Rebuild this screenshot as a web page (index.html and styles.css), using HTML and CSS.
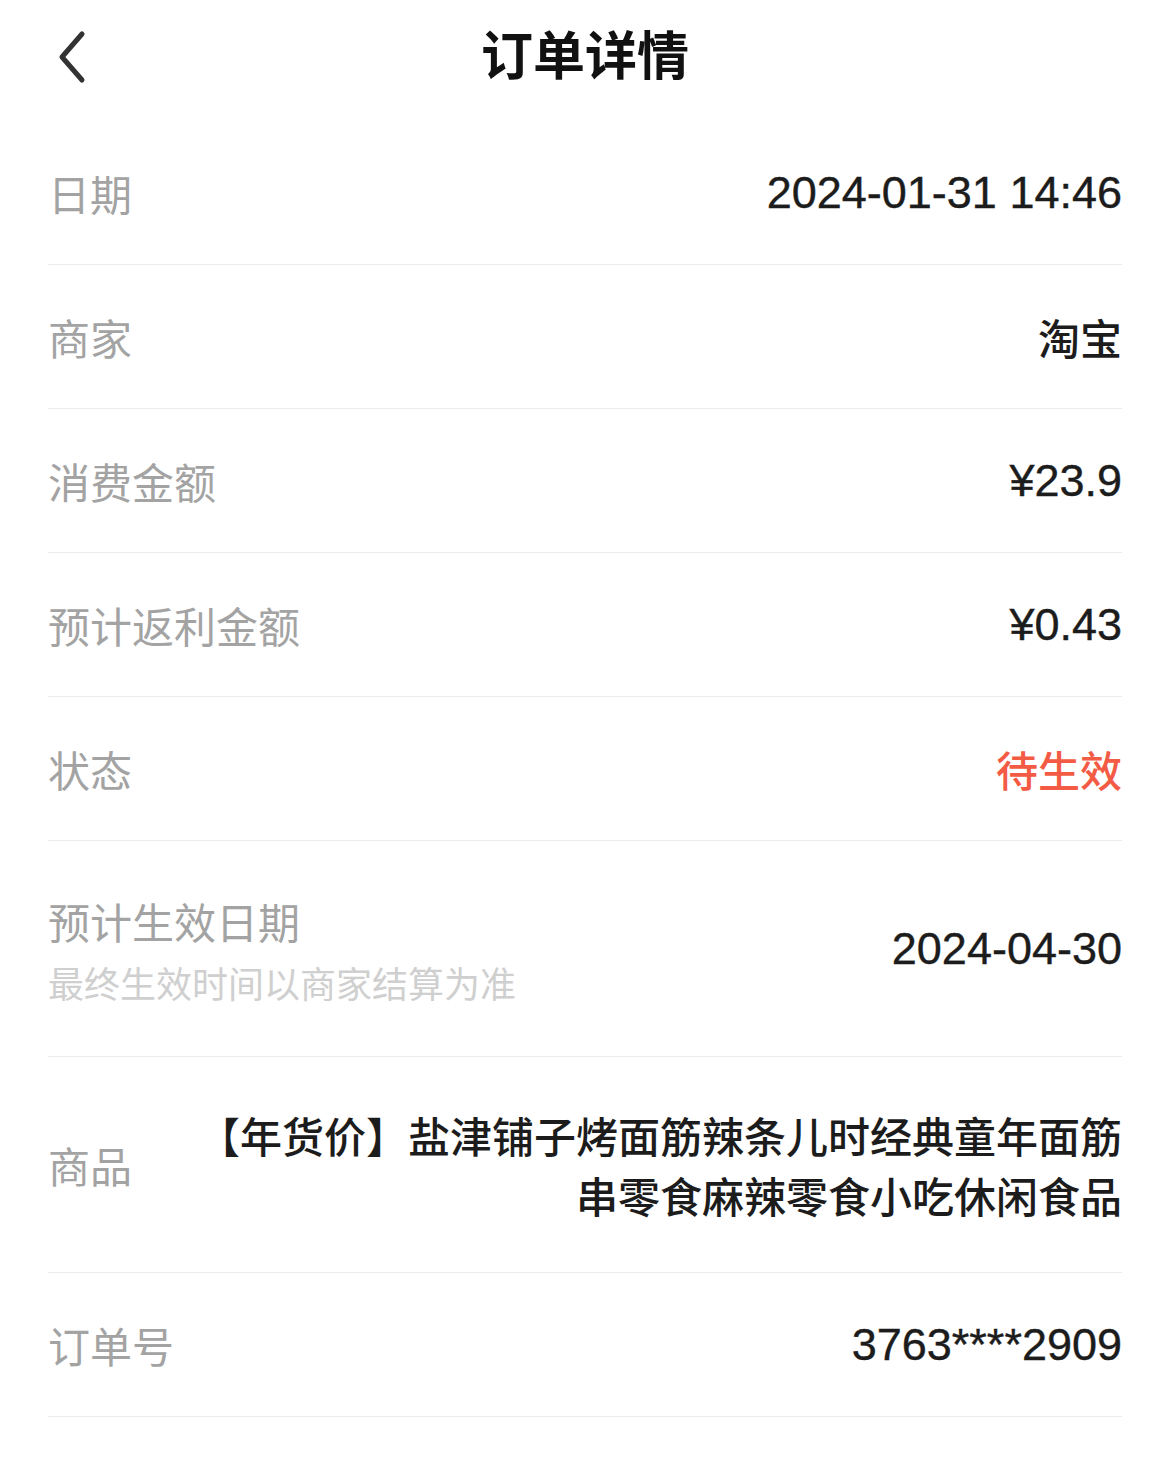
FILE: index.html
```html
<!DOCTYPE html>
<html lang="zh-CN">
<head>
  <meta charset="UTF-8">
  <meta name="viewport" content="width=device-width, initial-scale=1">
  <title>订单详情</title>
  <link rel="stylesheet" href="styles.css">
</head>
<body>

  <header class="topbar">
    <a class="back" href="#">
      <svg width="40" height="60" viewBox="0 0 40 60">
        <polyline points="26,10 6,33 26,56" fill="none" stroke="#333" stroke-width="5" stroke-linecap="round" stroke-linejoin="round"/>
      </svg>
    </a>
    <h1>订单详情</h1>
  </header>

  <!-- 订单信息列表 -->
  <section class="detail">
    <div class="row">
      <span class="label">日期</span>
      <span class="value num">2024-01-31 14:46</span>
    </div>
    <div class="row">
      <span class="label">商家</span>
      <span class="value">淘宝</span>
    </div>
    <div class="row">
      <span class="label">消费金额</span>
      <span class="value num">¥23.9</span>
    </div>
    <div class="row">
      <span class="label">预计返利金额</span>
      <span class="value num">¥0.43</span>
    </div>
    <div class="row">
      <span class="label">状态</span>
      <span class="value status">待生效</span>
    </div>
    <div class="row tall">
      <div class="label-group">
        <span class="label">预计生效日期</span>
        <span class="hint">最终生效时间以商家结算为准</span>
      </div>
      <span class="value num">2024-04-30</span>
    </div>
    <div class="row tall">
      <span class="label">商品</span>
      <span class="value goods">【年货价】盐津铺子烤面筋辣条儿时经典童年面筋串零食麻辣零食小吃休闲食品</span>
    </div>
    <div class="row">
      <span class="label">订单号</span>
      <span class="value num">3763****2909</span>
    </div>
  </section>

</body>
</html>
```

FILE: styles.css
```css
/* 基础 */
body {
  margin: 0;
  background: #fff;
  color: #1c1c1c;
  font-family: "Liberation Sans", "Noto Sans CJK SC", sans-serif;
}

/* 顶部标题栏 */
.topbar {
  position: relative;
  height: 121px;
  display: flex;
  align-items: center;
  justify-content: center;
}
.topbar h1 {
  margin: 0;
  margin-top: -17px;
  font-family: "Noto Sans CJK SC", sans-serif;
  font-size: 52px;
  font-weight: 700;
  color: #111;
}
.back {
  position: absolute;
  left: 56px;
  top: 24px;
  display: block;
  width: 40px;
  height: 60px;
}

/* 列表 */
.detail {
  padding: 0 48px;
}
.row {
  display: flex;
  align-items: center;
  justify-content: space-between;
  height: 144px;
  border-bottom: 1px solid #ececec;
  box-sizing: border-box;
}
.row.tall {
  height: 216px;
}
.label {
  font-family: "Noto Sans CJK SC", sans-serif;
  font-size: 42px;
  color: #a3a3a3;
  white-space: nowrap;
}
.label-group {
  display: flex;
  flex-direction: column;
}
.hint {
  font-family: "Noto Sans CJK SC", sans-serif;
  font-size: 36px;
  color: #cfcfcf;
  margin-top: 5px;
}
.value {
  font-family: "Noto Sans CJK SC", sans-serif;
  font-size: 42px;
  font-weight: 500;
  color: #1c1c1c;
  text-align: right;
}
.value.num {
  font-family: "Liberation Sans", "Noto Sans CJK SC", sans-serif;
  font-size: 45px;
  font-weight: 400;
  -webkit-text-stroke: 0.4px #1c1c1c;
}
.value.status {
  color: #f45b45;
}
.value.goods {
  max-width: 940px;
  line-height: 60px;
}
```
